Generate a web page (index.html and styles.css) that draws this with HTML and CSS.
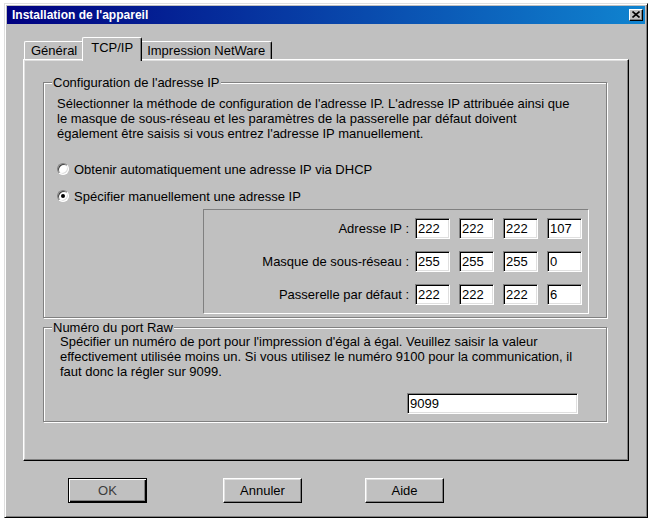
FILE: index.html
```html
<!DOCTYPE html>
<html lang="fr">
<head>
<meta charset="utf-8">
<title>Installation de l'appareil</title>
<link rel="stylesheet" href="styles.css">
</head>
<body>
<div class="window">
  <div class="titlebar">
    <span class="title">Installation de l'appareil</span>
    <span class="close"><svg width="8" height="7" viewBox="0 0 8 7"><path d="M0.5 0.5 L7.5 6.5 M7.5 0.5 L0.5 6.5" stroke="#000" stroke-width="1.6" fill="none"/></svg></span>
  </div>
  <div class="client">
    <div class="tabs">
      <div class="tab first">Général</div>
      <div class="tab active">TCP/IP</div>
      <div class="tab">Impression NetWare</div>
    </div>
    <div class="panel">
      <fieldset class="group g1">
        <legend>Configuration de l'adresse IP</legend>
        <div class="inner1">
          <p class="desc">Sélectionner la méthode de configuration de l'adresse IP. L'adresse IP attribuée ainsi que<br>le masque de sous-réseau et les paramètres de la passerelle par défaut doivent<br>également être saisis si vous entrez l'adresse IP manuellement.</p>
          <div class="radio r1"><span class="rb"></span><span>Obtenir automatiquement une adresse IP via DHCP</span></div>
          <div class="radio r2"><span class="rb checked"></span><span>Spécifier manuellement une adresse IP</span></div>
          <div class="ipbox">
            <span class="lbl">Adresse IP :</span>
            <span class="edit">222</span><span class="edit">222</span><span class="edit">222</span><span class="edit">107</span>
            <span class="lbl">Masque de sous-réseau :</span>
            <span class="edit">255</span><span class="edit">255</span><span class="edit">255</span><span class="edit">0</span>
            <span class="lbl">Passerelle par défaut :</span>
            <span class="edit">222</span><span class="edit">222</span><span class="edit">222</span><span class="edit">6</span>
          </div>
        </div>
      </fieldset>
      <fieldset class="group g2">
        <legend>Numéro du port Raw</legend>
        <div class="inner2">
          <p class="desc2">Spécifier un numéro de port pour l'impression d'égal à égal. Veuillez saisir la valeur<br>effectivement utilisée moins un. Si vous utilisez le numéro 9100 pour la communication, il<br>faut donc la régler sur 9099.</p>
          <span class="edit port">9099</span>
        </div>
      </fieldset>
    </div>
    <div class="buttons">
      <div class="btn default"><span>OK</span></div>
      <div class="btn cancel"><span>Annuler</span></div>
      <div class="btn help"><span>Aide</span></div>
    </div>
  </div>
</div>
</body>
</html>
```

FILE: styles.css
```css
html, body {
  margin: 0;
  padding: 0;
  background: #ffffff;
}
body {
  font-family: "Liberation Sans", Arial, sans-serif;
  font-size: 13px;
  line-height: 15px;
  color: #000;
}
.window {
  margin: 3px 0 0 4px;
  width: 644px;
  height: 515px;
  box-sizing: border-box;
  background: #c0c0c0;
  border: 1px solid;
  border-color: #dfdfdf #000 #000 #dfdfdf;
  box-shadow: inset 1px 1px #fff, inset -1px -1px #808080;
  padding: 2px;
  display: flex;
  flex-direction: column;
}
.titlebar {
  height: 18px;
  flex: none;
  background: linear-gradient(to right, #000080, #1084d0);
  display: flex;
  align-items: center;
  justify-content: space-between;
  padding: 0 2px 0 5px;
}
.title {
  color: #fff;
  font-weight: bold;
  font-size: 12px;
  white-space: nowrap;
}
.close {
  width: 14px;
  height: 12px;
  box-sizing: border-box;
  background: #c0c0c0;
  border: 1px solid;
  border-color: #fff #000 #000 #fff;
  box-shadow: inset -1px -1px #808080;
  display: flex;
  align-items: center;
  justify-content: center;
  padding: 0 1px 1px 0;
}
.close svg { display: block; }
.client {
  flex: 1;
  padding: 13px 16px 0 16px;
  display: flex;
  flex-direction: column;
}
.tabs {
  display: flex;
  align-items: flex-end;
  height: 22px;
  padding-left: 1px;
}
.tab {
  height: 18px;
  box-sizing: border-box;
  padding: 0 6px;
  line-height: 17px;
  border-left: 1px solid #fff;
  border-top: 1px solid #fff;
  border-right: 1px solid #000;
  box-shadow: inset -1px 0 #808080;
  border-radius: 2px 2px 0 0;
  white-space: nowrap;
  background: #c0c0c0;
}
.tab.active {
  height: 24px;
  margin: 0 -2px -2px -2px;
  padding: 0 8px;
  line-height: 19px;
  position: relative;
  z-index: 2;
}
.panel {
  height: 402px;
  box-sizing: border-box;
  border: 1px solid;
  border-color: #fff #000 #000 #fff;
  box-shadow: inset -1px -1px #808080, inset 1px 1px #dfdfdf;
  padding: 15px 21px 0 19px;
  position: relative;
  z-index: 1;
}
.group {
  margin: 0;
  padding: 0;
  min-width: 0;
  border: 1px solid #808080;
  box-shadow: inset 1px 1px #fff, 1px 1px #fff;
}
.group legend {
  margin-left: 8px;
  padding: 0 1px;
  background: #c0c0c0;
  line-height: 15px;
  white-space: nowrap;
}
.inner1 {
  padding: 6px 0 0 13px;
}
.desc, .desc2 {
  margin: 0;
  white-space: nowrap;
}
.radio {
  display: flex;
  align-items: center;
  height: 16px;
  gap: 5px;
}
.r1 { margin-top: 20px; }
.r2 { margin-top: 11px; }
.rb {
  width: 12px;
  height: 12px;
  box-sizing: border-box;
  border-radius: 50%;
  background: #fff;
  border: 1px solid;
  border-color: #808080 #fff #fff #808080;
  box-shadow: inset 1px 1px #404040, inset -1px -1px #dfdfdf;
  display: flex;
  align-items: center;
  justify-content: center;
}
.rb.checked::after {
  content: "";
  width: 4px;
  height: 4px;
  border-radius: 50%;
  background: #000;
}
.ipbox {
  margin: 5px 0 3px 146px;
  width: 386px;
  box-sizing: border-box;
  border: 1px solid;
  border-color: #808080 #fff #fff #808080;
  padding: 8px 6px 8px 0;
  display: grid;
  grid-template-columns: 1fr 35px 35px 35px 35px;
  grid-auto-rows: 21px;
  column-gap: 9px;
  row-gap: 12px;
}
.lbl {
  text-align: right;
  align-self: center;
  white-space: nowrap;
  margin-right: -3px;
}
.edit {
  display: block;
  box-sizing: border-box;
  height: 21px;
  background: #fff;
  border: 1px solid;
  border-color: #808080 #fff #fff #808080;
  box-shadow: inset 1px 1px #000, inset -1px -1px #dfdfdf;
  padding: 2px 0 0 2px;
  line-height: 16px;
}
.g2 {
  margin-top: 2px;
}
.inner2 {
  padding: 0 0 7px 16px;
}
.desc2 {
  margin-top: -1px;
}
.edit.port {
  width: 171px;
  margin: 14px 0 0 347px;
}
.buttons {
  display: flex;
  margin-top: 17px;
  padding-left: 45px;
}
.btn {
  width: 79px;
  height: 25px;
  box-sizing: border-box;
  border: 1px solid;
  border-color: #fff #000 #000 #fff;
  box-shadow: inset -1px -1px #808080, inset 1px 1px #dfdfdf;
  display: flex;
  align-items: center;
  justify-content: center;
}
.btn.default {
  border: 1px solid #000;
  box-shadow: inset 1px 1px #fff, inset -1px -1px #000, inset -2px -2px #808080;
}
.btn.default span { color: #3c3c3c; }
.cancel { margin-left: 76px; }
.help { margin-left: 63px; }
```
